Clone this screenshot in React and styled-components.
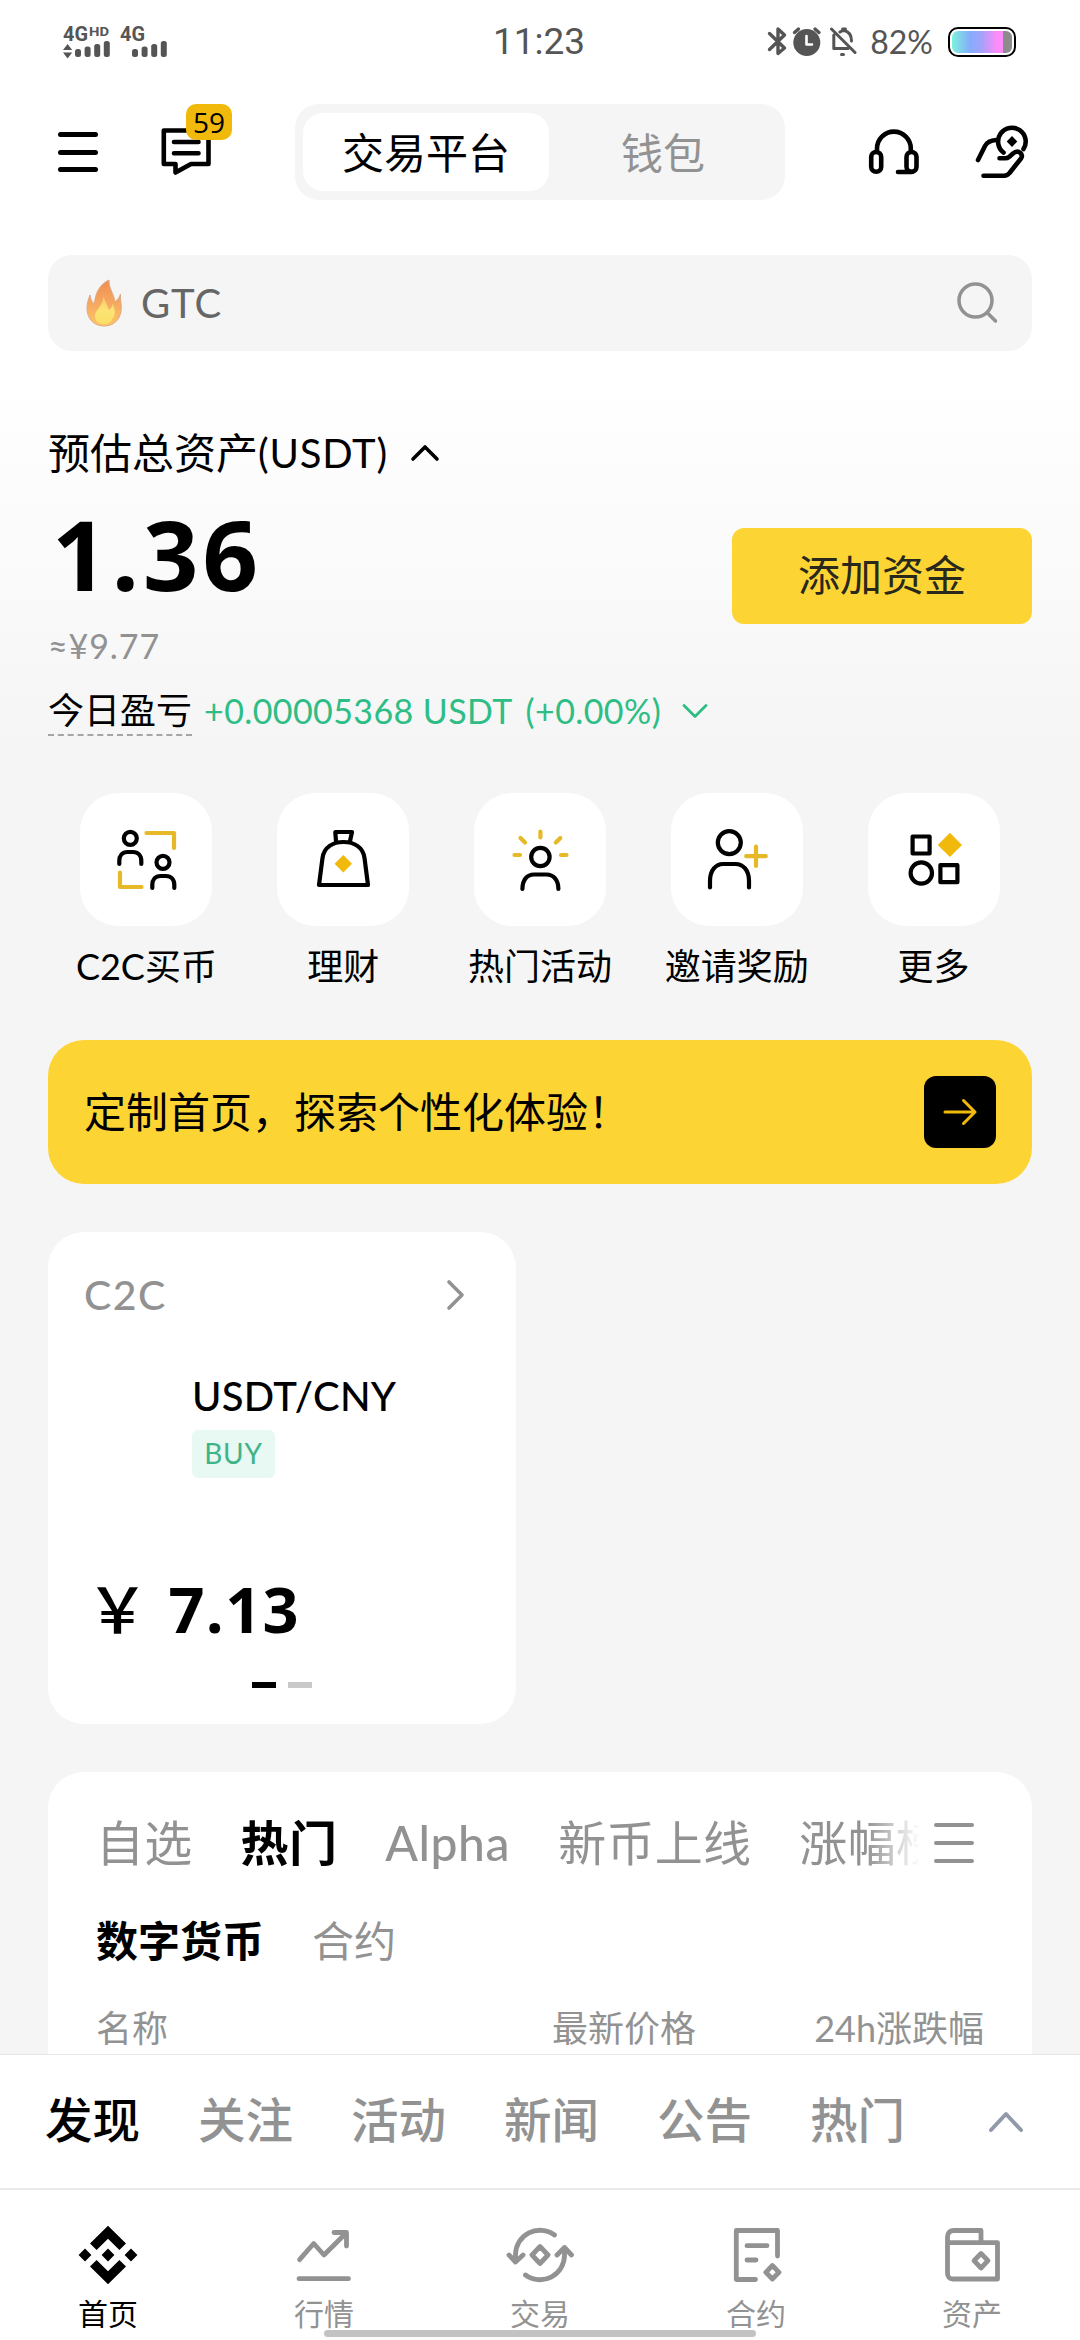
import styled, { createGlobalStyle } from "styled-components";

const latin = `"Lato", "Noto Sans CJK SC", sans-serif`
const digits = `"Open Sans", "Noto Sans CJK SC", sans-serif`

const shortcuts = [
    { label: "C2C买币", icon: "p2p" },
    { label: "理财", icon: "earn" },
    { label: "热门活动", icon: "events" },
    { label: "邀请奖励", icon: "invite" },
    { label: "更多", icon: "more" },
]
const marketTabs = ["自选", "热门", "Alpha", "新币上线", "涨幅榜"]
const feedTabs = ["发现", "关注", "活动", "新闻", "公告", "热门"]
const navItems = [
    { label: "首页", icon: "home" },
    { label: "行情", icon: "markets" },
    { label: "交易", icon: "trade" },
    { label: "合约", icon: "futures" },
    { label: "资产", icon: "wallet" },
]

// the tile drawings share a 132 x 132 canvas
const tileIcons = {
    p2p: <>
        <circle cx="50.3" cy="45.3" r="6.5" />
        <path d="M39.3 71V68C39.3 62.5 42.5 59 47.5 59H53C58 59 61.3 62.5 61.3 68V71" />
        <circle cx="83" cy="69.3" r="6.5" />
        <path d="M72.3 95V92C72.3 86.5 75.5 83 80.5 83H86C91 83 94.3 86.5 94.3 92V95" />
        <path className="gold" d="M66.5 40H94V55M40 79.500V94H61.500" />
    </>,
    earn: <>
        <path d="M59 48L58.300 39H75L73 48" />
        <path d="M42 92L45.500 65C47 54 56 49 66.500 49S86 54 87.500 65L91 92Z" />
        <path className="fill" d="M66.300 62L75 70.700L66.300 79.400L57.600 70.700Z" />
    </>,
    events: <>
        <circle cx="66.400" cy="64" r="9.200" />
        <path d="M48.400 96C48.400 87 53 81.500 60 81.500H72.500C79.500 81.500 84.400 87 84.400 96" />
        <path className="gold" d="M66.400 38.500V44.500M40.500 62H46M87 62H92.500M46.500 45L51 49.500M86.300 45L81.800 49.500" />
    </>,
    invite: <>
        <circle cx="58.300" cy="49.600" r="11.500" />
        <path d="M39 94.500V88C39 77 45 71 52 71H64.500C72 71 78 77 78 88V94.500" />
        <path className="gold" d="M85 53.500V73M75.200 63.200H94.800" />
    </>,
    more: <>
        <rect x="44.600" y="43.500" width="17" height="17" />
        <circle cx="53.300" cy="80" r="10.700" />
        <rect x="72.400" y="72.200" width="17" height="17" />
        <path className="fill" d="M81.900 39.800L94 52L81.900 64.100L69.800 52Z" />
    </>,
}

// bottom bar drawings, 60 x 60 each
const navIcons = {
    home: <path fill="#000" stroke="none" d="M30 .7L48 18.600L41.400 25.100L30 13.800L18.600 25.100L12 18.600ZM30 59.300L48 41.400L41.400 34.900L30 46.200L18.600 34.900L12 41.400ZM30 23.600L36.400 30L30 36.400L23.600 30ZM7 23.600L13.400 30L7 36.400L.6 30ZM53 23.600L59.400 30L53 36.400L46.600 30Z" />,
    markets: <path d="M5.600 34.700L19.700 18.500L30 30L52.400 7.700M40 7.500H52.500V21M5 53.700H54.500" />,
    trade: <path d="M-1 30L5.500 37L13 30M5.500 37V30A24.500 24.500 0 0 1 44.500 10M47 30L54.500 22.500L61.500 30M54.500 22.500V30A24.500 24.500 0 0 1 15.500 50M30 21.500L38 30L30 38.500L22 30Z" />,
    futures: <path d="M51.500 31V5.500H10.300V54.500H29.500M21 20.700H41M21 35H30M46.400 40.500L53 47.300L46.400 54L39.800 47.300Z" />,
    wallet: <path d="M5.500 17.700H55.500V54H11Q5.500 54 5.500 48V12Q5.500 5.500 12 5.500H39V17M39 28.500L46 35.700L39 43L32 35.700Z" />,
}

const Signal = () => (
    <svg width="110" height="62" viewBox="62 10 110 62" fill="#555">
        <g fontFamily="Roboto, sans-serif" fontWeight="700">
            <text x="63" y="40" fontSize="20.500" textLength="25" lengthAdjust="spacingAndGlyphs">4G</text>
            <text x="89" y="35" fontSize="13.500" textLength="20" lengthAdjust="spacingAndGlyphs">HD</text>
            <text x="120" y="40" fontSize="20.500" textLength="25" lengthAdjust="spacingAndGlyphs">4G</text>
        </g>
        <path d="M63 49L67.600 43L72.200 49ZM63 51.500H72.200L67.600 57.500Z" />
        {[75, 132].map((x) => [8, 10.5, 13, 16].map((h, i) => (
            <rect key={`${x}-${i}`} x={x + i * 9.6} y={56 - h} width="6" height={h} rx="2.500" />
        )))}
    </svg>
)

const StatusIcons = () => (
    <svg width="90" height="32" viewBox="765 27 90 32" fill="none" stroke="#555" strokeWidth="3.400" strokeLinejoin="round" strokeLinecap="round">
        <path d="M767.500 34.500L782.500 49L776 54.500V30L782.500 36L767.500 50.500" />
        <circle cx="804.800" cy="43.500" r="13.500" fill="#555" stroke="none" />
        <path d="M792.500 33.500L796.500 30M817 33.500L813 30" />
        <path d="M804.500 37V45.500H810" stroke="#fff" strokeWidth="2.600" />
        <path d="M829.500 30L853 53.500M831.800 36V49.500H846M838 33Q840 31.500 842 31.500Q849.500 33 849.500 42M840.500 30H843.500M839.500 55.500H841.500" strokeWidth="3" />
    </svg>
)

const Flame = () => (
    <svg width="36" height="48" viewBox="0 0 36 48">
        <defs>
            <linearGradient id="flame" x1="0" y1="0" x2="0" y2="1">
                <stop offset="0" stopColor="#ee8f52" />
                <stop offset=".6" stopColor="#f8ad62" />
                <stop offset="1" stopColor="#fbc866" />
            </linearGradient>
            <linearGradient id="core" x1="0" y1="0" x2="0" y2="1">
                <stop offset="0" stopColor="#fbc56c" />
                <stop offset=".5" stopColor="#fce474" />
                <stop offset="1" stopColor="#fbdf66" />
            </linearGradient>
        </defs>
        <path d="M23 1C22.500 9 28 15 29 23C32 21 34 17 34.500 15C34 22 36 26 35 32C34 41 27 47 18.500 47C8 47 1 40 1 29C1 23 3 19 4 16C4.500 20 5.500 23 8.500 25C9 14 14 5 23 1Z" fill="url(#flame)" stroke="#dfa981" strokeWidth="1" />
        <path d="M17.500 17C18.500 22 21 24 22.500 31C25 30 26 28 26.500 25C29 30 30 35 27 39C25 43 22 45 18 45C12 45 8.500 41 9 36C9.500 31 17 27 17.500 17Z" fill="url(#core)" />
    </svg>
)

const ChatIcon = () => (
    <svg width="52" height="50" viewBox="161 127 52 50" fill="none" stroke="#000" strokeWidth="4.600" strokeLinejoin="round" strokeLinecap="round">
        <path d="M163.800 130.500H208.500V164H191L175.500 172.500V164H163.800ZM174 142H198.500M174 153.300H198.500" />
    </svg>
)

const HeadsetIcon = () => (
    <svg width="52" height="48" viewBox="868 128 52 48" fill="none" stroke="#000" strokeWidth="4.600" strokeLinecap="round">
        <path d="M877 150V148.500A16.800 16.800 0 0 1 910.800 148.500V150M898 172H912" />
        <rect x="871.200" y="152" width="10" height="19.800" rx="5" />
        <rect x="906.500" y="152" width="10" height="19.800" rx="5" />
    </svg>
)

const HandCoinIcon = () => (
    <svg width="58" height="58" viewBox="974 123 58 58" fill="none" stroke="#000" strokeWidth="4.600" strokeLinejoin="round" strokeLinecap="round">
        <path d="M1003.500 152.500A13.800 13.800 0 1 1 1023.500 149" />
        <path d="M1012 136L1017.300 141.500L1012 147L1006.700 141.500Z" fill="#000" stroke="none" />
        <path d="M978 160L985 146Q988 140.500 996 140M983.500 175.700H1004Q1007.500 175.700 1009.500 173L1021 158.500Q1023 155.500 1020.500 153Q1017 150 1013 153.500L1009 157Q1007.500 158.300 1005 158.300H999.500" />
    </svg>
)

const App = () => {
    return <Screen>
        <GlobalStyle />
        <StatusBar>
            <Signal />
            <Clock>11:23</Clock>
            <StatusRight>
                <StatusIcons />
                <Percent>82%</Percent>
                <Battery><Charge /></Battery>
            </StatusRight>
        </StatusBar>

        <Header>
            <HeaderLeft>
                <Burger><i /><i /><i /></Burger>
                <Messages>
                    <ChatIcon />
                    <Badge>59</Badge>
                </Messages>
            </HeaderLeft>
            <Switcher>
                <SwitchOption $active>交易平台</SwitchOption>
                <SwitchOption>钱包</SwitchOption>
            </Switcher>
            <HeaderRight>
                <HeadsetIcon />
                <HandCoinIcon />
            </HeaderRight>
        </Header>

        <SearchBar>
            <Flame />
            <SearchText>GTC</SearchText>
            <svg width="42" height="42" viewBox="0 0 42 42" fill="none" stroke="#929292" strokeWidth="3.500" strokeLinecap="round">
                <circle cx="18.500" cy="18.500" r="16.500" />
                <path d="M30.500 31L38.500 39" />
            </svg>
        </SearchBar>

        <Balance>
            <BalanceTitle>
                预估总资产<span>(USDT)</span>
                <svg width="30" height="18" viewBox="0 0 30 18" fill="none" stroke="#000" strokeWidth="3.600" strokeLinecap="round" strokeLinejoin="round">
                    <path d="M3 15L15 3L27 15" />
                </svg>
            </BalanceTitle>
            <BalanceRow>
                <Total>1.36</Total>
                <AddFunds>添加资金</AddFunds>
            </BalanceRow>
            <Approx>≈¥9.77</Approx>
            <Pnl>
                <PnlLabel>今日盈亏</PnlLabel>
                <PnlValue>+0.00005368 USDT</PnlValue>
                <PnlRate>(+0.00%)</PnlRate>
                <svg width="28" height="16" viewBox="0 0 28 16" fill="none" stroke="#2ebd85" strokeWidth="2.800" strokeLinecap="round" strokeLinejoin="round">
                    <path d="M3 2.500L14 13.500L25 2.500" />
                </svg>
            </Pnl>
        </Balance>

        <Shortcuts>
            {shortcuts.map(({ label, icon }) => (
                <Shortcut key={label}>
                    <Tile><TileIcon viewBox="0 0 132 132">{tileIcons[icon]}</TileIcon></Tile>
                    <span>{label}</span>
                </Shortcut>
            ))}
        </Shortcuts>

        <Banner>
            定制首页，探索个性化体验！
            <BannerButton>
                <svg width="36" height="30" viewBox="0 0 36 30" fill="none" stroke="#f0b90b" strokeWidth="3" strokeLinecap="round" strokeLinejoin="round">
                    <path d="M3 15H33M21.500 3.500L33 15L21.500 26.500" />
                </svg>
            </BannerButton>
        </Banner>

        <RateCard>
            <RateHead>
                C2C
                <svg width="20" height="32" viewBox="0 0 20 32" fill="none" stroke="#929292" strokeWidth="3.600" strokeLinecap="round" strokeLinejoin="round">
                    <path d="M3 3L16 16L3 29" />
                </svg>
            </RateHead>
            <Pair>USDT/CNY</Pair>
            <Side>BUY</Side>
            <Price><span>￥</span>7.13</Price>
            <Pager><Dash $active /><Dash /></Pager>
        </RateCard>

        <MarketCard>
            <MarketTop>
                <MarketTabs>
                    {marketTabs.map((tab) => <MarketTab key={tab} $active={tab === "热门"}>{tab}</MarketTab>)}
                </MarketTabs>
                <Burger $muted><i /><i /><i /></Burger>
            </MarketTop>
            <SubTabs>
                <SubTab $active>数字货币</SubTab>
                <SubTab>合约</SubTab>
            </SubTabs>
            <Columns>
                <span>名称</span>
                <span>最新价格</span>
                <span>24h涨跌幅</span>
            </Columns>
        </MarketCard>

        <FeedBar>
            {feedTabs.map((tab, i) => <FeedTab key={tab} $active={i === 0}>{tab}</FeedTab>)}
            <svg width="38" height="24" viewBox="0 0 38 24" fill="none" stroke="#9299aa" strokeWidth="4" strokeLinecap="round" strokeLinejoin="round">
                <path d="M4 20L19 4L34 20" />
            </svg>
        </FeedBar>

        <BottomNav>
            {navItems.map(({ label, icon }, i) => (
                <NavItem key={label} $active={i === 0}>
                    <NavIcon viewBox="0 0 60 60">{navIcons[icon]}</NavIcon>
                    <span>{label}</span>
                </NavItem>
            ))}
            <HomeIndicator />
        </BottomNav>
    </Screen>
}

const GlobalStyle = createGlobalStyle`
    * {
        box-sizing: border-box;
    }
    body {
        margin: 0;
        background: #fff;
    }
    svg {
        display: block;
        flex-shrink: 0;
    }
`
const Screen = styled.div`
    width: 1080px;
    height: 2340px;
    overflow: hidden;
    display: flex;
    flex-direction: column;
    font-family: ${latin};
    color: #000;
    white-space: nowrap;
    background: linear-gradient(#fff 380px, #f5f5f5 760px);
`
const StatusBar = styled.div`
    height: 84px;
    flex-shrink: 0;
    padding: 0 64px 0 62px;
    display: grid;
    grid-template-columns: 1fr auto 1fr;
    align-items: center;
    color: #555;
`
const Clock = styled.span`
    font-family: Roboto, sans-serif;
    font-size: 37px;
    line-height: 44px;
`
const StatusRight = styled.div`
    display: flex;
    align-items: center;
    justify-content: flex-end;
`
const Percent = styled.span`
    font-size: 32px;
    line-height: 40px;
    margin: 0 15px 0 13px;
`
const Battery = styled.div`
    width: 68px;
    height: 30px;
    padding: 2px;
    border: 2px solid #000;
    border-radius: 10px;
`
const Charge = styled.div`
    height: 100%;
    border-radius: 6px;
    background: linear-gradient(90deg, #7df3df 0, #86acfb 18px, #a2a3fb 29px, #fd8cf8 45px, #fd8cf8 51px, #8c8c8c 51px);
`
const Header = styled.div`
    height: 136px;
    flex-shrink: 0;
    padding: 20px 48px 20px 58px;
    display: flex;
    align-items: center;
    justify-content: space-between;
`
const HeaderLeft = styled.div`
    width: 237px;
    display: flex;
    align-items: center;
    gap: 63px;
`
const Burger = styled.div`
    width: 40px;
    height: 40px;
    flex-shrink: 0;
    display: flex;
    flex-direction: column;
    justify-content: space-between;
    i {
        height: ${({ $muted }) => $muted ? "4px" : "5px"};
        border-radius: 3px;
        background: ${({ $muted }) => $muted ? "#929292" : "#000"};
    }
`
const Messages = styled.div`
    position: relative;
`
const Badge = styled.span`
    position: absolute;
    left: 25px;
    top: -23px;
    width: 46px;
    height: 36px;
    border-radius: 10px;
    background: #f0b90b;
    font-family: ${digits};
    font-size: 28px;
    font-weight: 500;
    line-height: 36px;
    text-align: center;
`
const Switcher = styled.div`
    width: 490px;
    height: 96px;
    padding: 9px 8px;
    border-radius: 24px;
    display: flex;
    background: #f5f5f5;
`
const SwitchOption = styled.div`
    width: ${({ $active }) => $active ? "246px" : "228px"};
    height: 78px;
    border-radius: 20px;
    background: ${({ $active }) => $active ? "#fff" : "transparent"};
    color: ${({ $active }) => $active ? "#000" : "#929292"};
    font-size: 42px;
    line-height: 80px;
    text-align: center;
`
const HeaderRight = styled.div`
    width: 247px;
    display: flex;
    align-items: center;
    justify-content: flex-end;
    gap: 54px;
`
const SearchBar = styled.div`
    height: 96px;
    flex-shrink: 0;
    margin: 35px 48px 0;
    padding: 0 33px 0 38px;
    border-radius: 24px;
    background: #f5f5f5;
    display: flex;
    align-items: center;
`
const SearchText = styled.span`
    flex: 1;
    margin-left: 19px;
    font-size: 40px;
    line-height: 48px;
    letter-spacing: 1px;
    color: #666;
`
const Balance = styled.div`
    height: 442px;
    flex-shrink: 0;
    padding: 72px 48px 0;
`
const BalanceTitle = styled.div`
    height: 60px;
    display: flex;
    align-items: center;
    font-size: 42px;
    line-height: 60px;
    span {
        font-size: 40px;
        letter-spacing: 0.8px;
    }
    svg {
        margin-left: 22px;
    }
`
const BalanceRow = styled.div`
    height: 141px;
    display: flex;
    justify-content: space-between;
    align-items: flex-end;
`
const Total = styled.div`
    padding: 0 0 3px 4px;
    font-family: ${digits};
    font-size: 97px;
    font-weight: 700;
    line-height: 136px;
    letter-spacing: 4px;
`
const AddFunds = styled.div`
    width: 300px;
    height: 96px;
    border-radius: 12px;
    background: #fcd535;
    color: #29281c;
    font-size: 42px;
    line-height: 94px;
    text-align: center;
`
const Approx = styled.div`
    font-size: 34px;
    line-height: 44px;
    letter-spacing: 0.9px;
    color: #929292;
`
const Pnl = styled.div`
    height: 50px;
    margin-top: 18px;
    display: flex;
    align-items: center;
    color: #2ebd85;
    font-size: 34px;
    line-height: 48px;
`
const PnlLabel = styled.span`
    height: 50px;
    border-bottom: 2px dashed #a5a5a5;
    color: #000;
    font-size: 36px;
`
const PnlValue = styled.span`
    margin-left: 12px;
    letter-spacing: 0.4px;
`
const PnlRate = styled.span`
    margin: 0 20px 0 13px;
    letter-spacing: 0.4px;
`
const Shortcuts = styled.div`
    height: 247px;
    flex-shrink: 0;
    margin: 0 48px;
    display: grid;
    grid-template-columns: repeat(5, 1fr);
`
const Shortcut = styled.div`
    display: flex;
    flex-direction: column;
    align-items: center;
    font-size: 36px;
    line-height: 50px;
    span {
        margin-top: 15px;
    }
`
const Tile = styled.div`
    width: 132px;
    height: 133px;
    border-radius: 38px;
    background: #fff;
`
const TileIcon = styled.svg`
    width: 132px;
    height: 132px;
    fill: none;
    stroke: #000;
    stroke-width: 4.200;
    stroke-linecap: round;
    stroke-linejoin: round;
    .gold {
        stroke: #e5b927;
    }
    .fill {
        fill: #f0b90b;
        stroke: none;
    }
`
const Banner = styled.div`
    height: 144px;
    flex-shrink: 0;
    margin: 0 48px;
    padding: 0 36px;
    border-radius: 36px;
    background: #fcd535;
    display: flex;
    align-items: center;
    justify-content: space-between;
    font-size: 42px;
    line-height: 60px;
`
const BannerButton = styled.div`
    width: 72px;
    height: 72px;
    border-radius: 12px;
    background: #000;
    display: grid;
    place-items: center;
`
const RateCard = styled.div`
    width: 468px;
    height: 492px;
    flex-shrink: 0;
    margin: 48px 0 0 48px;
    padding: 36px 36px 0;
    border-radius: 36px;
    background: #fff;
    display: flex;
    flex-direction: column;
`
const RateHead = styled.div`
    height: 54px;
    padding-right: 14px;
    display: flex;
    align-items: center;
    justify-content: space-between;
    color: #929292;
    font-size: 41px;
    font-weight: 500;
    line-height: 52px;
    letter-spacing: 1.4px;
`
const Pair = styled.div`
    margin: 47px 0 0 108px;
    font-size: 40px;
    font-weight: 500;
    line-height: 54px;
    letter-spacing: 0.3px;
`
const Side = styled.div`
    width: 83px;
    height: 48px;
    margin: 7px 0 0 108px;
    border-radius: 6px;
    background: #e8f8f2;
    color: #3fb488;
    font-size: 28px;
    line-height: 47px;
    letter-spacing: 0.8px;
    text-align: center;
`
const Price = styled.div`
    margin: 88px 0 0 2px;
    display: flex;
    gap: 18px;
    font-family: ${digits};
    font-size: 63px;
    font-weight: 700;
    line-height: 86px;
    letter-spacing: 1.4px;
    span {
        font-weight: 500;
    }
`
const Pager = styled.div`
    margin-top: 30px;
    display: flex;
    justify-content: center;
    gap: 12px;
`
const Dash = styled.div`
    width: 24px;
    height: 6px;
    background: ${({ $active }) => $active ? "#000" : "#c9c9c9"};
`
const MarketCard = styled.div`
    height: 282px;
    flex-shrink: 0;
    margin: 48px 48px 0;
    padding: 36px 48px 0;
    border-radius: 36px 36px 0 0;
    background: #fff;
`
const MarketTop = styled.div`
    height: 70px;
    padding-right: 10px;
    display: flex;
    align-items: center;
    justify-content: space-between;
`
const MarketTabs = styled.div`
    width: 824px;
    overflow: hidden;
    display: flex;
    gap: 48px;
    mask-image: linear-gradient(90deg, #000 770px, transparent 824px);
`
const MarketTab = styled.span`
    flex-shrink: 0;
    font-size: 48px;
    font-weight: ${({ $active }) => $active ? 700 : 400};
    line-height: 70px;
    letter-spacing: 0.3px;
    color: ${({ $active }) => $active ? "#000" : "#929292"};
    &:nth-child(3) {
        font-weight: 500;
        letter-spacing: 0.6px;
    }
`
const SubTabs = styled.div`
    margin-top: 33px;
    display: flex;
    gap: 48px;
`
const SubTab = styled.span`
    font-size: 42px;
    font-weight: ${({ $active }) => $active ? 700 : 400};
    line-height: 60px;
    color: ${({ $active }) => $active ? "#000" : "#929292"};
`
const Columns = styled.div`
    margin-top: 32px;
    display: grid;
    grid-template-columns: 456px 1fr auto;
    color: #929292;
    font-size: 36px;
    line-height: 50px;
`
const FeedBar = styled.div`
    height: 136px;
    flex-shrink: 0;
    padding: 0 55px 0 45px;
    border-top: 1px solid #e6e6e6;
    border-bottom: 2px solid #eaeaea;
    background: #fff;
    display: flex;
    align-items: center;
    svg {
        margin-left: auto;
    }
`
const FeedTab = styled.span`
    width: 153px;
    padding-bottom: 4px;
    font-size: 47.500px;
    font-weight: 500;
    line-height: 70px;
    color: ${({ $active }) => $active ? "#000" : "#929292"};
`
const BottomNav = styled.div`
    position: relative;
    height: 150px;
    flex-shrink: 0;
    padding-top: 35px;
    background: #fff;
    display: grid;
    grid-template-columns: repeat(5, 1fr);
`
const NavItem = styled.div`
    display: flex;
    flex-direction: column;
    align-items: center;
    color: ${({ $active }) => $active ? "#000" : "#929292"};
    font-size: 30px;
    line-height: 40px;
    span {
        margin-top: 8px;
    }
`
const NavIcon = styled.svg`
    width: 60px;
    height: 60px;
    overflow: visible;
    fill: none;
    stroke: #929292;
    stroke-width: 4.800;
    stroke-linecap: round;
    stroke-linejoin: round;
`
// system gesture bar, lies over the labels
const HomeIndicator = styled.div`
    position: absolute;
    left: 324px;
    bottom: 3px;
    width: 432px;
    height: 7px;
    border-radius: 4px;
    background: #c2c2c2;
`
export default App;
